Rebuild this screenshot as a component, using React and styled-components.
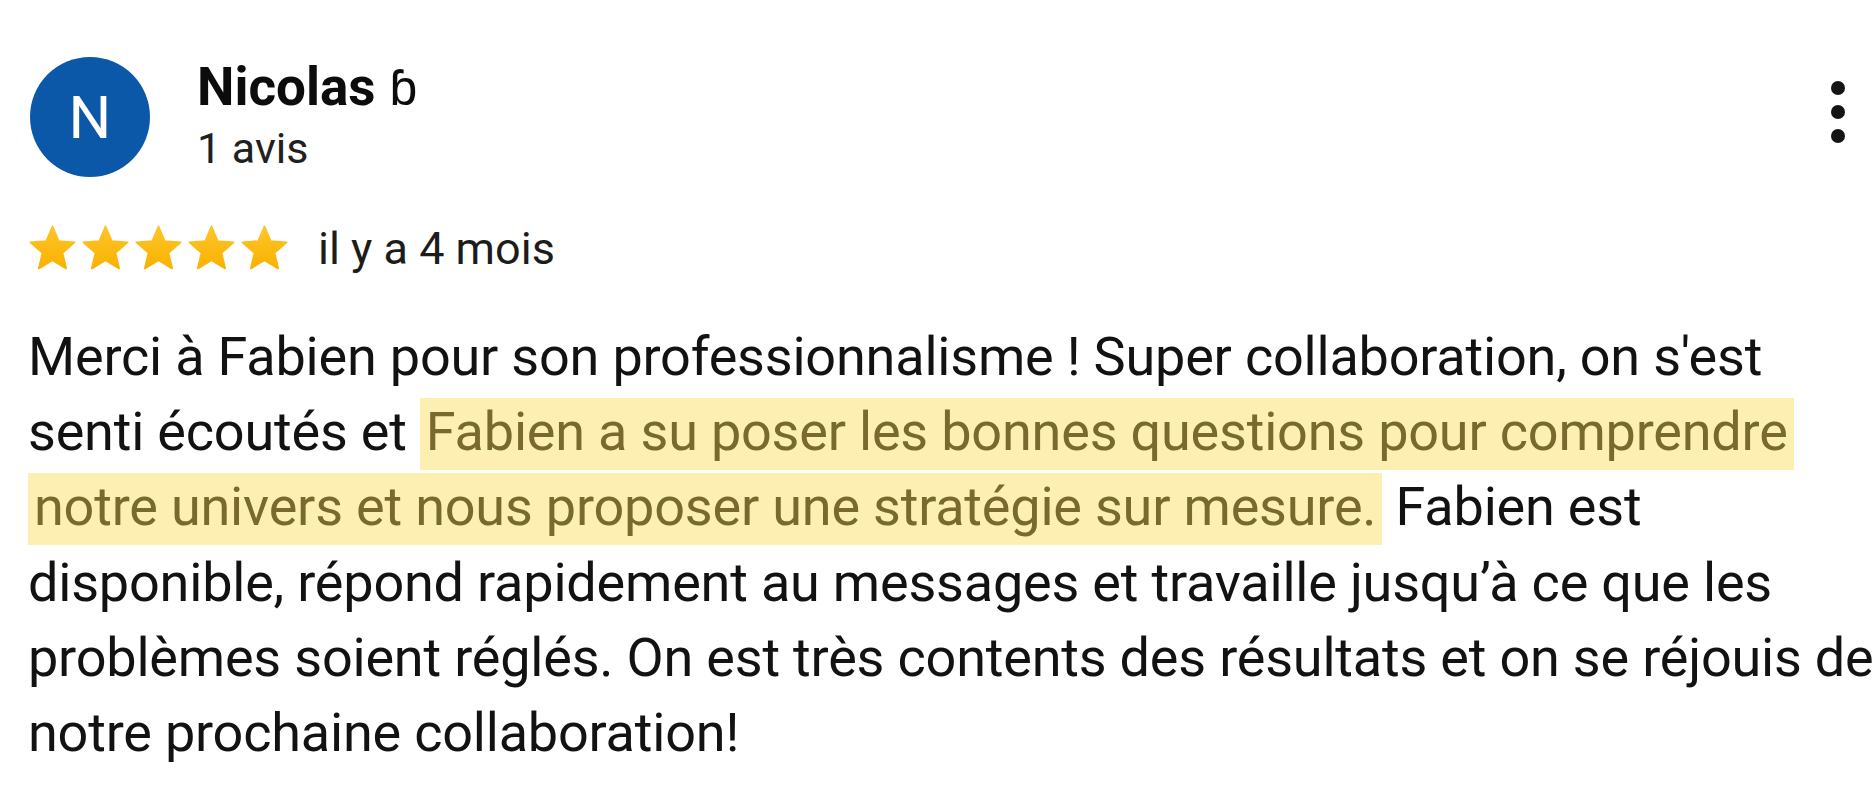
import React from "react";
import styled, { createGlobalStyle } from "styled-components";

const GlobalStyle = createGlobalStyle`
  html, body {
    margin: 0;
    padding: 0;
    background: #ffffff;
    overflow: hidden;
  }
  body {
    font-family: Roboto, "Liberation Sans", Arial, sans-serif;
    color: #141414;
  }
`;

const Card = styled.div`
  width: 1872px;
  height: 790px;
  box-sizing: border-box;
  padding: 57px 25px 0 30px;
`;

const Header = styled.div`
  display: flex;
  align-items: flex-start;
`;

const Avatar = styled.div`
  width: 120px;
  height: 120px;
  flex-shrink: 0;
  border-radius: 50%;
  background: #0b58a8;
  color: #ffffff;
  font-size: 60px;
  display: flex;
  align-items: center;
  justify-content: center;
`;

const NameBlock = styled.div`
  margin-left: 47px;
  flex: 1;
  display: flex;
  flex-direction: column;
`;

const Name = styled.div`
  font-size: 53px;
  font-weight: 700;
  line-height: 60px;
  color: #0c0c0c;
`;

const Glyph = styled.span`
  font-weight: 400;
  font-size: 50px;
  margin-left: 14px;
`;

const Count = styled.div`
  font-size: 43px;
  line-height: 60px;
  color: #202020;
`;

const MenuButton = styled.div`
  margin-top: 23px;
  width: 18px;
  display: flex;
  justify-content: center;
`;

const StarsRow = styled.div`
  margin-top: 43px;
  margin-left: -4px;
  height: 54px;
  display: flex;
  align-items: center;
`;

const Stars = styled.div`
  display: flex;
`;

const When = styled.span`
  margin-left: 27px;
  font-size: 45px;
  color: #1c1c1c;
`;

const Review = styled.p`
  margin: 44px 0 0 -2px;
  font-size: 54px;
  letter-spacing: -0.2px;
  line-height: 75.2px;
  white-space: nowrap;
  color: #121212;
`;

const Highlight = styled.span`
  color: #7a692f;
  padding: 2px 6px 7px 6px;
  background: #fdefb2;
  -webkit-box-decoration-break: clone;
  box-decoration-break: clone;
`;

function Star() {
  return (
    <svg width="53" height="53" viewBox="0 0 24 24">
      <defs>
        <linearGradient id="starFill" x1="0" y1="0" x2="0" y2="1">
          <stop offset="0" stopColor="#fec52a" />
          <stop offset="1" stopColor="#f9b200" />
        </linearGradient>
      </defs>
      <path
        d="M12 17.27L18.18 21l-1.64-7.03L22 9.24l-7.19-.61L12 2 9.19 8.63 2 9.24l5.46 4.73L5.82 21z"
        fill="url(#starFill)"
        stroke="url(#starFill)"
        strokeWidth="0.8"
        strokeLinejoin="round"
      />
    </svg>
  );
}

function MoreIcon() {
  return (
    <svg width="18" height="64" viewBox="0 0 18 64">
      <circle cx="9" cy="8" r="7" fill="#151515" />
      <circle cx="9" cy="32" r="7" fill="#151515" />
      <circle cx="9" cy="56" r="7" fill="#151515" />
    </svg>
  );
}

export default function App() {
  return (
    <>
      <GlobalStyle />
      <Card>
        <Header>
          <Avatar>N</Avatar>
          <NameBlock>
            <Name>
              Nicolas<Glyph>ɓ</Glyph>
            </Name>
            <Count>1 avis</Count>
          </NameBlock>
          <MenuButton>
            <MoreIcon />
          </MenuButton>
        </Header>
        <StarsRow>
          <Stars>
            {[0, 1, 2, 3, 4].map((i) => (
              <Star key={i} />
            ))}
          </Stars>
          <When>il y a 4 mois</When>
        </StarsRow>
        <Review>
          Merci à Fabien pour son professionnalisme ! Super collaboration, on s'est
          <br />
          senti écoutés et{" "}
          <Highlight>
            Fabien a su poser les bonnes questions pour comprendre
            <br />
            notre univers et nous proposer une stratégie sur mesure.
          </Highlight>{" "}
          Fabien est
          <br />
          disponible, répond rapidement au messages et travaille jusqu’à ce que les
          <br />
          problèmes soient réglés. On est très contents des résultats et on se réjouis de
          <br />
          notre prochaine collaboration!
        </Review>
      </Card>
    </>
  );
}
